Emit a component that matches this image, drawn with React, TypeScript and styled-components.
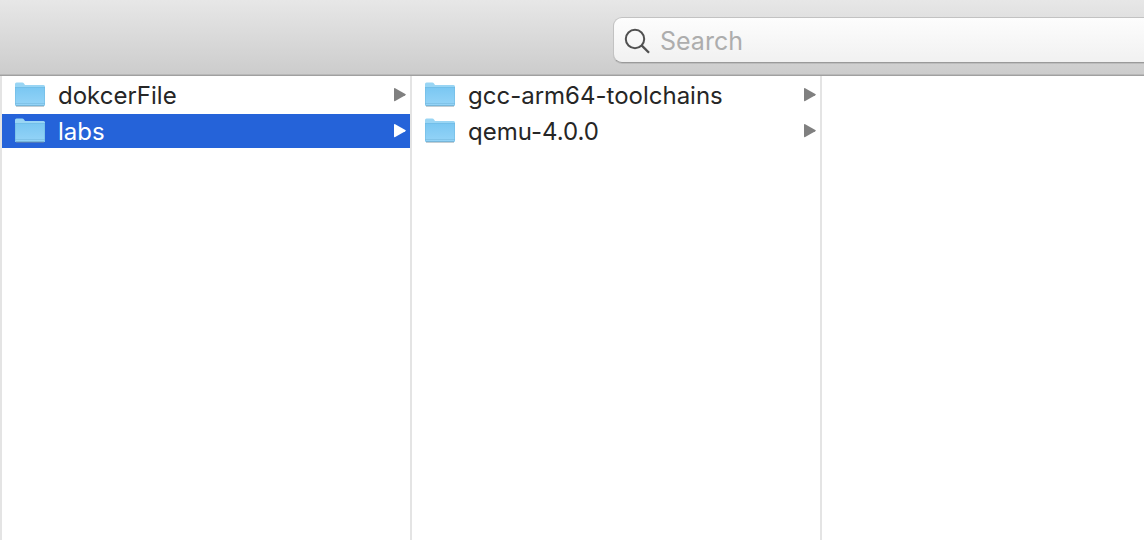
import React, { useState } from "react";
import styled, { createGlobalStyle } from "styled-components";

const GlobalStyle = createGlobalStyle`
  *, *::before, *::after { box-sizing: border-box; }
  body {
    margin: 0;
    background: #ffffff;
    color: #262626;
    font-family: Inter, "Liberation Sans", sans-serif;
    font-size: 24px;
    overflow: hidden;
  }
`;

const Window = styled.div`
  display: flex;
  flex-direction: column;
  min-height: 100vh;
`;

const Toolbar = styled.header`
  display: grid;
  grid-template-columns: 613px minmax(0, 1fr);
  padding: 17px 0 12px;
  background: linear-gradient(#e7e7e7, #cccccc);
  border-bottom: 1px solid #a0a0a0;
  box-shadow: inset 0 -1px 0 #b8b8b8;
`;

const SearchField = styled.label`
  grid-column: 2;
  display: flex;
  align-items: center;
  gap: 9px;
  height: 46px;
  padding-left: 10px;
  background: linear-gradient(#fdfdfd, #f1f1f1);
  border: 1px solid #c2c2c2;
  border-right: 0;
  border-bottom-color: #9a9a9a;
  border-radius: 9px 0 0 9px;
  box-shadow: 0 1px 0 #bcbcbc;
`;

const SearchInput = styled.input`
  flex: 1;
  min-width: 0;
  padding: 2px 0 0;
  border: 0;
  outline: 0;
  background: transparent;
  color: #262626;
  font: inherit;
  font-size: 25px;
  line-height: 32px;
  &::placeholder { color: #adadad; opacity: 1; }
`;

const Columns = styled.main`
  flex: 1;
  display: grid;
  grid-template-columns: 410px 410px minmax(0, 1fr);
`;

const Column = styled.ul`
  display: flex;
  flex-direction: column;
  gap: 2px;
  margin: 0;
  padding: 2px 0;
  list-style: none;
  border-left: 2px solid #e4e4e4;
`;

const Row = styled.button<{ $selected: boolean }>`
  display: flex;
  align-items: center;
  gap: 12px;
  width: 100%;
  height: 34px;
  padding: 0 4px 0 12px;
  border: 0;
  background: ${(p) => (p.$selected ? "#2563d9" : "transparent")};
  color: ${(p) => (p.$selected ? "#ffffff" : "inherit")};
  font: inherit;
  line-height: 32px;
  text-align: left;
`;

const Name = styled.span`
  flex: 1;
  padding-top: 2px;
  white-space: nowrap;
`;

function SearchIcon() {
  return (
    <svg width="27" height="28" viewBox="0 0 27 28" fill="none" stroke="#505050" strokeWidth="2" aria-hidden="true">
      <circle cx="11" cy="13" r="9.2" />
      <path d="M17.6 19.4L25 26.8" strokeWidth="2.3" />
    </svg>
  );
}

function FolderIcon() {
  return (
    <svg width="32" height="26" viewBox="0 0 32 26" aria-hidden="true">
      <defs>
        <linearGradient id="folder-front" x1="0" y1="0" x2="0" y2="1">
          <stop offset="0" stopColor="#7ac7f2" />
          <stop offset="1" stopColor="#95d4f7" />
        </linearGradient>
      </defs>
      <path d="M2 24.5H30" stroke="#7f8c94" strokeOpacity="0.4" />
      <path d="M1 22.5V2Q1 .5 2.5 .5H8.2Q9.4 .5 10 1.6L11 3.1H29.5Q31 3.1 31 4.6V22.5Q31 24 29.5 24H2.5Q1 24 1 22.5Z" fill="#99d5f4" />
      <path d="M1 5.5H31V22.5Q31 24 29.5 24H2.5Q1 24 1 22.5Z" fill="url(#folder-front)" />
      <path d="M1 5.5H31" stroke="#72bfe9" />
      <path d="M1 21.5H31" stroke="#80c3e8" />
      <path d="M1.5 5V23M30.5 5V23" stroke="#6db8e0" strokeOpacity="0.5" />
      <path d="M2 23.6H30" stroke="#74b3d6" />
    </svg>
  );
}

function Arrow() {
  return (
    <svg width="12" height="16" viewBox="0 0 12 16" aria-hidden="true">
      <path d="M0 2Q0 .6 1.2 1.2L11.3 6.9Q12.4 7.6 11.3 8.3L1.2 14Q0 14.6 0 13.2Z" fill="currentColor" />
    </svg>
  );
}

const ArrowSlot = styled.span<{ $selected: boolean }>`
  display: flex;
  color: ${(p) => (p.$selected ? "#ffffff" : "#808080")};
`;

interface ListProps {
  items: string[];
  selected: string | null;
  onSelect: (name: string) => void;
}

function FolderColumn({ items, selected, onSelect }: ListProps) {
  return (
    <Column>
      {items.map((name) => (
        <li key={name}>
          <Row type="button" $selected={name === selected} onClick={() => onSelect(name)}>
            <FolderIcon />
            <Name>{name}</Name>
            <ArrowSlot $selected={name === selected}>
              <Arrow />
            </ArrowSlot>
          </Row>
        </li>
      ))}
    </Column>
  );
}

export default function App() {
  const [parent, setParent] = useState<string | null>("labs");
  const [child, setChild] = useState<string | null>(null);
  return (
    <>
      <GlobalStyle />
      <Window>
        <Toolbar>
          <SearchField>
            <SearchIcon />
            <SearchInput type="text" placeholder="Search" aria-label="Search" />
          </SearchField>
        </Toolbar>
        <Columns>
          <FolderColumn items={["dokcerFile", "labs"]} selected={parent} onSelect={setParent} />
          <FolderColumn items={["gcc-arm64-toolchains", "qemu-4.0.0"]} selected={child} onSelect={setChild} />
          <Column />
        </Columns>
      </Window>
    </>
  );
}
